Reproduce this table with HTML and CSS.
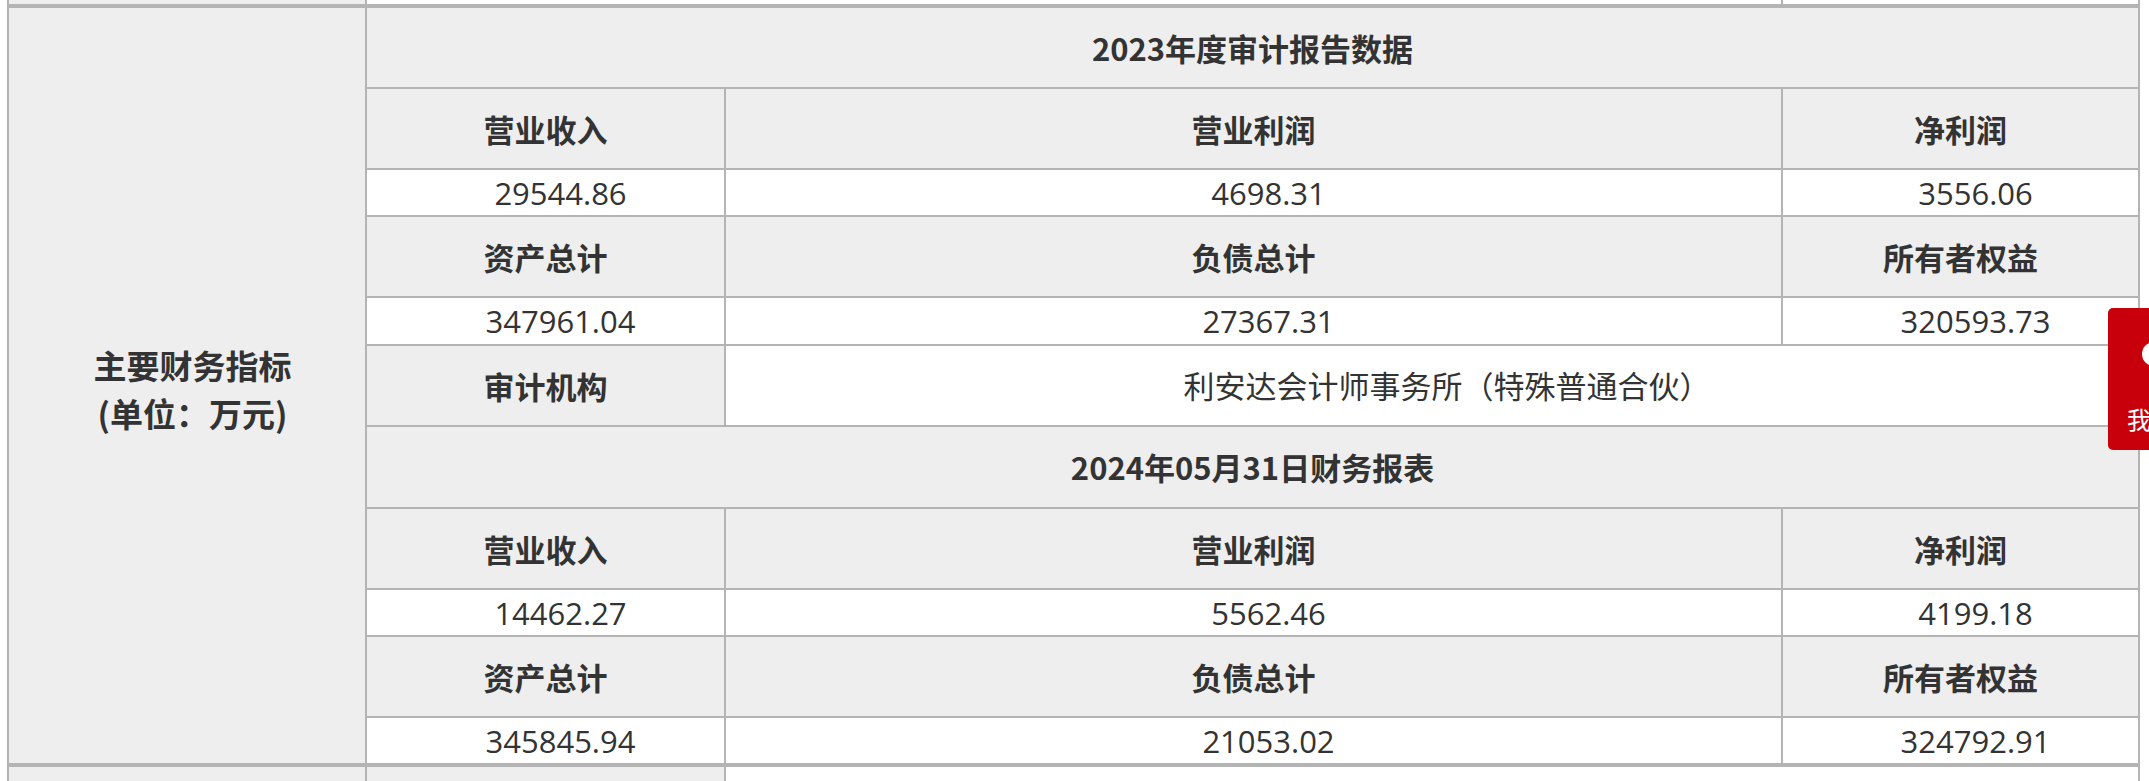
FILE: index.html
```html
<!DOCTYPE html>
<html lang="zh-CN">
<head>
<meta charset="utf-8">
<title>主要财务指标</title>
<link rel="stylesheet" href="styles.css">
</head>
<body>
<div class="page">
  <table class="info prev">
    <colgroup><col class="c1"><col class="c2"><col class="c3"><col class="c4"></colgroup>
    <tr class="stub"><td class="gray"></td><td colspan="2"></td><td></td></tr>
  </table>

  <table class="info main">
    <colgroup><col class="c1"><col class="c2"><col class="c3"><col class="c4"></colgroup>
    <tr class="tall">
      <td class="gray label" rowspan="11">主要财务指标<br>(单位：万元)</td>
      <td class="gray head" colspan="3">2023年度审计报告数据</td>
    </tr>
    <tr class="tall">
      <td class="gray head">营业收入</td>
      <td class="gray head">营业利润</td>
      <td class="gray head">净利润</td>
    </tr>
    <tr class="short">
      <td class="val">29544.86</td>
      <td class="val">4698.31</td>
      <td class="val">3556.06</td>
    </tr>
    <tr class="tall">
      <td class="gray head">资产总计</td>
      <td class="gray head">负债总计</td>
      <td class="gray head">所有者权益</td>
    </tr>
    <tr class="short taller">
      <td class="val">347961.04</td>
      <td class="val">27367.31</td>
      <td class="val">320593.73</td>
    </tr>
    <tr class="tall">
      <td class="gray head">审计机构</td>
      <td class="val wide" colspan="2">利安达会计师事务所（特殊普通合伙）</td>
    </tr>
    <tr class="tall taller">
      <td class="gray head" colspan="3">2024年05月31日财务报表</td>
    </tr>
    <tr class="tall">
      <td class="gray head">营业收入</td>
      <td class="gray head">营业利润</td>
      <td class="gray head">净利润</td>
    </tr>
    <tr class="short">
      <td class="val">14462.27</td>
      <td class="val">5562.46</td>
      <td class="val">4199.18</td>
    </tr>
    <tr class="tall">
      <td class="gray head">资产总计</td>
      <td class="gray head">负债总计</td>
      <td class="gray head">所有者权益</td>
    </tr>
    <tr class="short">
      <td class="val">345845.94</td>
      <td class="val">21053.02</td>
      <td class="val">324792.91</td>
    </tr>
  </table>

  <table class="info next">
    <colgroup><col class="c1"><col class="c2"><col class="c3"><col class="c4"></colgroup>
    <tr class="tail"><td class="gray"></td><td class="gray"></td><td colspan="2"></td></tr>
  </table>
</div>

<div class="float-tab">
  <span class="tab-icon"></span>
  <span class="tab-text">我</span>
</div>
</body>
</html>
```

FILE: styles.css
```css
html, body {
  margin: 0;
  padding: 0;
  background: #ffffff;
  overflow: hidden;
}

body {
  font-family: "Noto Sans CJK SC", "Microsoft YaHei", sans-serif;
  color: #333333;
}

.page {
  padding-left: 7px;
  width: 2133px;
}

.info {
  width: 2133px;
  table-layout: fixed;
  border-collapse: separate;
  border-spacing: 0;
  border: 1px solid #b4b4b4;
  font-size: 31px;
}

.c1 { width: 358px; }
.c2 { width: 359px; }
.c3 { width: 1057px; }
.c4 { width: 357px; }

.info td {
  box-sizing: border-box;
  border: 1px solid #b4b4b4;
  padding: 0;
  text-align: center;
  vertical-align: middle;
  line-height: 40px;
  background: #ffffff;
}

.info td.gray {
  background: #eeeeee;
}

.prev {
  border-top: none;
}

.prev td {
  border-top: none;
  height: 5px;
}

.main tr.tall td { height: 81px; }
.main tr.short td { height: 47px; }
.main tr.short.taller td { height: 48px; }
.main tr.tall.taller td { height: 82px; }

.head,
.label {
  font-weight: 700;
}

.info td.label {
  font-size: 33px;
  line-height: 48px;
  padding-top: 6px;
  padding-left: 11px;
}

.val {
  font-family: "Open Sans", "Noto Sans CJK SC", sans-serif;
  padding-left: 30px !important;
}

.next td {
  height: 40px;
  border-bottom: none;
}

.float-tab {
  position: fixed;
  left: 2108px;
  top: 308px;
  width: 80px;
  height: 142px;
  background: #c8000b;
  border-radius: 5px 0 0 5px;
  color: #ffffff;
}

.tab-icon {
  position: absolute;
  left: 34px;
  top: 34px;
  width: 24px;
  height: 24px;
  border-radius: 50%;
  background: #ffffff;
}

.tab-text {
  position: absolute;
  left: 19px;
  top: 95px;
  font-size: 24px;
  line-height: 32px;
}
```
